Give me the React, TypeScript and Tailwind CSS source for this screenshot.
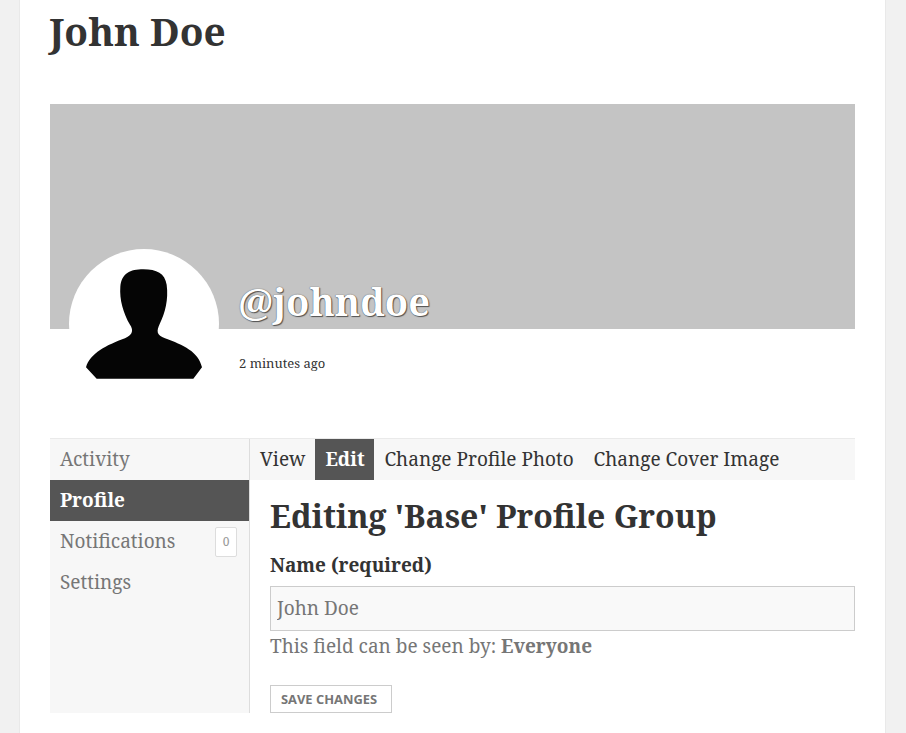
const serif = "font-['Noto_Serif','Droid_Serif','Liberation_Serif',serif]";

function Silhouette() {
  return (
    <svg width="116" height="110" viewBox="108 118 348 329" className="block blur-[0.4px]">
      <path
        fill="#050505"
        d="M280 118 C320 118 345 130 350 165 C356 210 345 250 330 280 C318 305 320 315 345 325 C400 345 445 365 456 412 L430 447 L140 447 L108 412 C120 370 170 345 225 325 C250 315 250 300 240 285 C220 250 208 210 211 170 C215 130 240 118 280 118 Z"
      />
    </svg>
  );
}

export default function App() {
  return (
    <div className={`h-[733px] overflow-hidden bg-[#f1f1f1] ${serif}`}>
      <div className="ml-[19px] h-[733px] w-[867px] border-x border-[#e9e9e9] bg-white pl-[30px] pr-[30px]">
        <h1 className="-ml-[1px] h-[104px] pt-[6px] text-[38.8px] leading-[50px] font-bold text-[#333333]">John Doe</h1>

        <div className="relative h-[225px] w-[805px] bg-[#c4c4c4]">
          <div className="absolute left-[19px] top-[145px] flex h-[150px] w-[150px] justify-center overflow-hidden rounded-full bg-white pt-[20px]">
            <Silhouette />
          </div>
          <div className="absolute left-[188px] top-[172px] text-[38px] leading-[50px] font-bold text-white [text-shadow:0_0_1px_#333,1px_1px_1px_#555]">@johndoe</div>
        </div>

        <div className="h-[109px] pl-[189px] pt-[25px] text-[13px] leading-[18px] text-[#333333]">2 minutes ago</div>

        <div className="flex h-[275px] w-[805px] border-t border-[#eaeaea]">
          <nav className="w-[200px] shrink-0 border-r border-[#dddddd] bg-[#f7f7f7] text-[19px] text-[#767676]">
            <div className="flex h-[41px] items-center pl-[10px]">Activity</div>
            <div className="flex h-[41px] items-center bg-[#555555] pl-[10px] font-bold text-white">Profile</div>
            <div className="flex h-[41px] items-center justify-between pl-[10px] pr-[12px]">
              <span>Notifications</span>
              <span className="flex h-[30px] w-[22px] items-center justify-center rounded-[2px] border border-[#dddddd] bg-white text-[12px] text-[#999999]">0</span>
            </div>
            <div className="flex h-[41px] items-center pl-[10px]">Settings</div>
          </nav>

          <div className="flex min-w-0 flex-1 flex-col">
            <div className="flex h-[41px] bg-[#f7f7f7] text-[19px] text-[#333333]">
              <div className="flex items-center px-[10px]">View</div>
              <div className="flex w-[59px] items-center bg-[#555555] pl-[10px] font-bold text-white">Edit</div>
              <div className="flex items-center px-[10px]">Change Profile Photo</div>
              <div className="flex items-center px-[10px]">Change Cover Image</div>
            </div>
            <div className="pl-[20px]">
              <h2 className="mt-[13px] text-[32px] leading-[45px] font-bold text-[#333333]">Editing 'Base' Profile Group</h2>
              <div className="mt-[14px] text-[19px] leading-[27px] font-bold text-[#333333]">Name (required)</div>
              <input
                readOnly
                value="John Doe"
                className={`mt-[7px] block h-[45px] w-full border border-[#cccccc] bg-[#f9f9f9] px-[6px] pb-[2px] text-[19px] text-[#767676] outline-none ${serif}`}
              />
              <div className="mt-[2px] text-[19px] leading-[27px] text-[#767676]">This field can be seen by: <strong>Everyone</strong></div>
              <button className="mt-[25px] flex h-[28px] w-[122px] items-center border border-[#cccccc] bg-white pl-[10px] pt-[2px] font-['Open_Sans',sans-serif] text-[12.9px] font-bold text-[#767676]">SAVE CHANGES</button>
            </div>
          </div>
        </div>
      </div>
    </div>
  );
}
